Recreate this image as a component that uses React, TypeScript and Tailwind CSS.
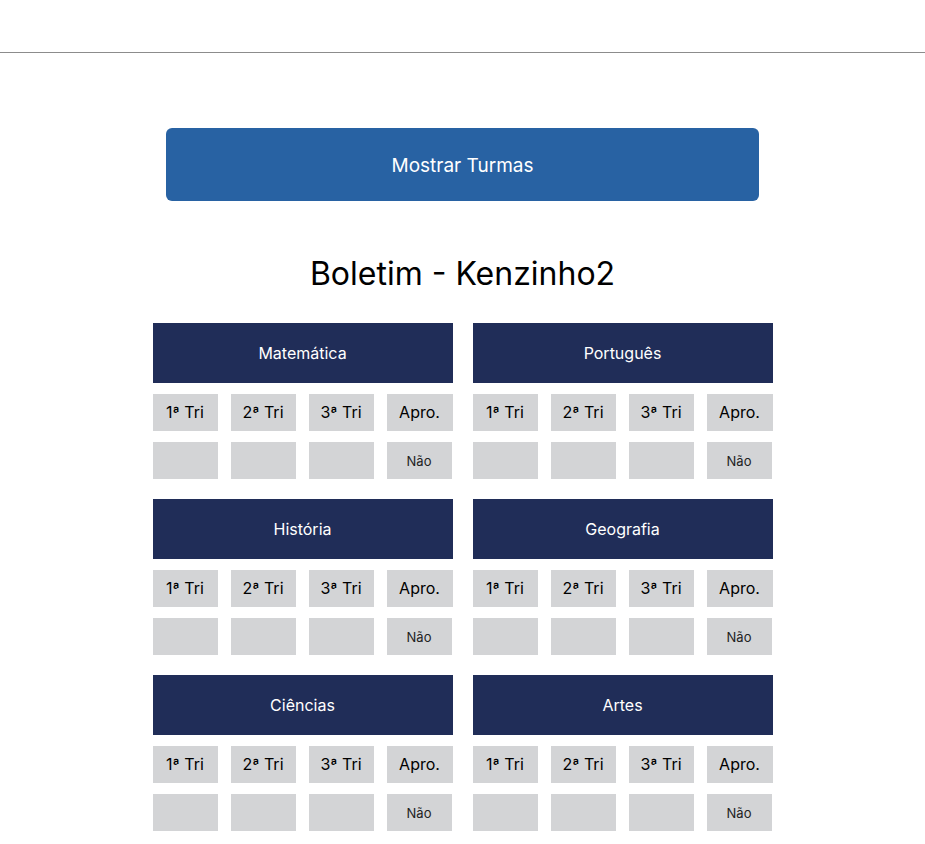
import React from "react";

const subjects = ["Matemática", "Português", "História", "Geografia", "Ciências", "Artes"];

function Card({ name }: { name: string }) {
  return (
    <div className="w-[300px] flex flex-col">
      <div className="h-[60px] bg-[#202d58] text-white text-[16px] flex items-center justify-center">
        {name}
      </div>
      <div className="mt-[11px] flex justify-between">
        {["1ª Tri", "2ª Tri", "3ª Tri"].map((t) => (
          <div key={t} className="w-[65px] h-[37px] pb-[1px] bg-[#d3d4d6] text-[16px] text-black flex items-center justify-center">
            {t}
          </div>
        ))}
        <div className="w-[66px] h-[37px] pb-[1px] bg-[#d3d4d6] text-[16px] text-black flex items-center justify-center">
          Apro.
        </div>
      </div>
      <div className="mt-[11px] flex justify-between pr-[1px]">
        <div className="w-[65px] h-[37px] bg-[#d3d4d6]" />
        <div className="w-[65px] h-[37px] bg-[#d3d4d6]" />
        <div className="w-[65px] h-[37px] bg-[#d3d4d6]" />
        <div className="w-[65px] h-[37px] pt-[2px] bg-[#d3d4d6] text-[13px] text-[#222] flex items-center justify-center">
          Não
        </div>
      </div>
    </div>
  );
}

export default function App() {
  return (
    <div className="w-[925px] min-h-[844px] bg-white" style={{ fontFamily: "Inter, 'Noto Sans', sans-serif" }}>
      <div className="h-[53px] border-b border-[#8c8c8c]" />
      <div className="flex flex-col items-center">
        <button className="mt-[75px] w-[593px] h-[73px] pt-[3px] rounded-[6px] bg-[#2862a3] text-white text-[19px] flex items-center justify-center">
          Mostrar Turmas
        </button>
        <h1 className="mt-[53px] text-[32px] leading-[40px] text-black">Boletim - Kenzinho2</h1>
        <div className="mt-[29px] grid grid-cols-[300px_300px] gap-x-[20px] gap-y-[20px]">
          {subjects.map((s) => (
            <Card key={s} name={s} />
          ))}
        </div>
      </div>
    </div>
  );
}
